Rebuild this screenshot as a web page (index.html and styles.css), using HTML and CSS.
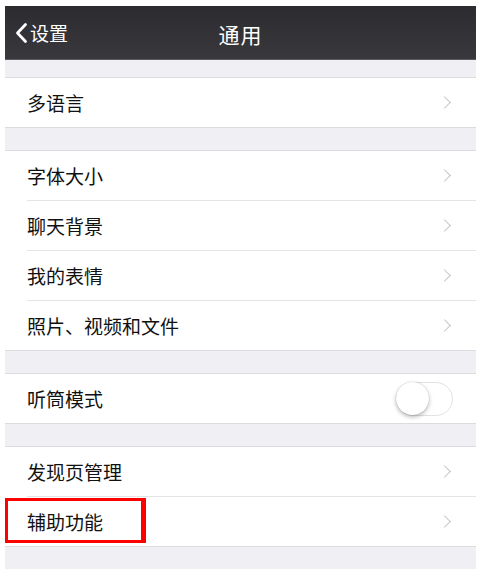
FILE: index.html
```html
<!DOCTYPE html>
<html lang="zh">
<head>
<meta charset="utf-8">
<link rel="stylesheet" href="styles.css">
</head>
<body>
<div class="screen">
  <header class="navbar">
    <div class="back">
      <svg class="back-icon" width="13" height="22" viewBox="0 0 13 22"><path d="M10.5 2.5 L2.5 11 L10.5 19.5" fill="none" stroke="#fff" stroke-width="2.8" stroke-linecap="round" stroke-linejoin="round"/></svg>
      <span>设置</span>
    </div>
    <div class="title">通用</div>
  </header>

  <div class="gap first"></div>
  <div class="group">
    <div class="row"><span class="label">多语言</span><span class="chev"></span></div>
  </div>

  <div class="gap"></div>
  <div class="group">
    <div class="row"><span class="label">字体大小</span><span class="chev"></span></div>
    <div class="row"><span class="label">聊天背景</span><span class="chev"></span></div>
    <div class="row"><span class="label">我的表情</span><span class="chev"></span></div>
    <div class="row"><span class="label">照片、视频和文件</span><span class="chev"></span></div>
  </div>

  <div class="gap"></div>
  <div class="group">
    <div class="row"><span class="label">听筒模式</span><span class="toggle"><span class="knob"></span></span></div>
  </div>

  <div class="gap"></div>
  <div class="group">
    <div class="row"><span class="label">发现页管理</span><span class="chev"></span></div>
    <div class="row highlight"><span class="label">辅助功能</span><span class="chev"></span><span class="mark"></span></div>
  </div>
  <div class="gap last"></div>
</div>
</body>
</html>
```

FILE: styles.css
```css
html, body {
  margin: 0;
  padding: 0;
  background: #fff;
}
body {
  font-family: "Noto Sans CJK SC", "Noto Sans", sans-serif;
}
.screen {
  margin: 6px 5px 0 5px;
  width: 471px;
  background: #efeff4;
}
.navbar {
  height: 54px;
  background: linear-gradient(#2c2c30, #38383d);
  border-bottom: 1px solid #5a5a60;
  box-sizing: border-box;
  display: flex;
  align-items: center;
  justify-content: center;
  position: relative;
  color: #fff;
}
.back {
  position: absolute;
  left: 10px;
  top: 0;
  bottom: 0;
  display: flex;
  align-items: center;
  gap: 2px;
  font-size: 19px;
}
.back-icon {
  display: block;
}
.title {
  font-size: 21px;
  letter-spacing: 1px;
  padding-top: 2px;
}
.gap {
  height: 22px;
}
.gap.first {
  height: 17px;
}
.gap.last {
  height: 22px;
}
.group {
  background: #fff;
  border-top: 1px solid #dcdce0;
  border-bottom: 1px solid #dcdce0;
}
.row {
  height: 49px;
  display: flex;
  align-items: center;
  justify-content: space-between;
  padding: 0 22px 0 22px;
  position: relative;
  font-size: 19px;
  color: #111;
}
.row + .row::before {
  content: "";
  position: absolute;
  left: 22px;
  right: 0;
  top: -1px;
  height: 1px;
  background: #e4e4e7;
}
.row + .row {
  margin-top: 1px;
}
.chev {
  width: 8px;
  height: 8px;
  border-top: 1.5px solid #c4c4c8;
  border-right: 1.5px solid #c4c4c8;
  transform: rotate(45deg);
  margin-right: 5px;
}
.toggle {
  width: 57px;
  height: 34px;
  border-radius: 17px;
  border: 1.5px solid #e2e2e5;
  box-sizing: border-box;
  background: #fff;
  position: relative;
  margin-right: 1px;
}
.knob {
  position: absolute;
  left: -1px;
  top: -1px;
  width: 33px;
  height: 33px;
  border-radius: 50%;
  background: #fff;
  box-shadow: 0 2px 4px rgba(0,0,0,0.28), 0 0 1px rgba(0,0,0,0.25);
}
.mark {
  position: absolute;
  left: 0;
  top: 1px;
  width: 141px;
  height: 45px;
  border: 3px solid #ff0000;
  border-right-width: 5px;
  box-sizing: border-box;
  pointer-events: none;
}
```
